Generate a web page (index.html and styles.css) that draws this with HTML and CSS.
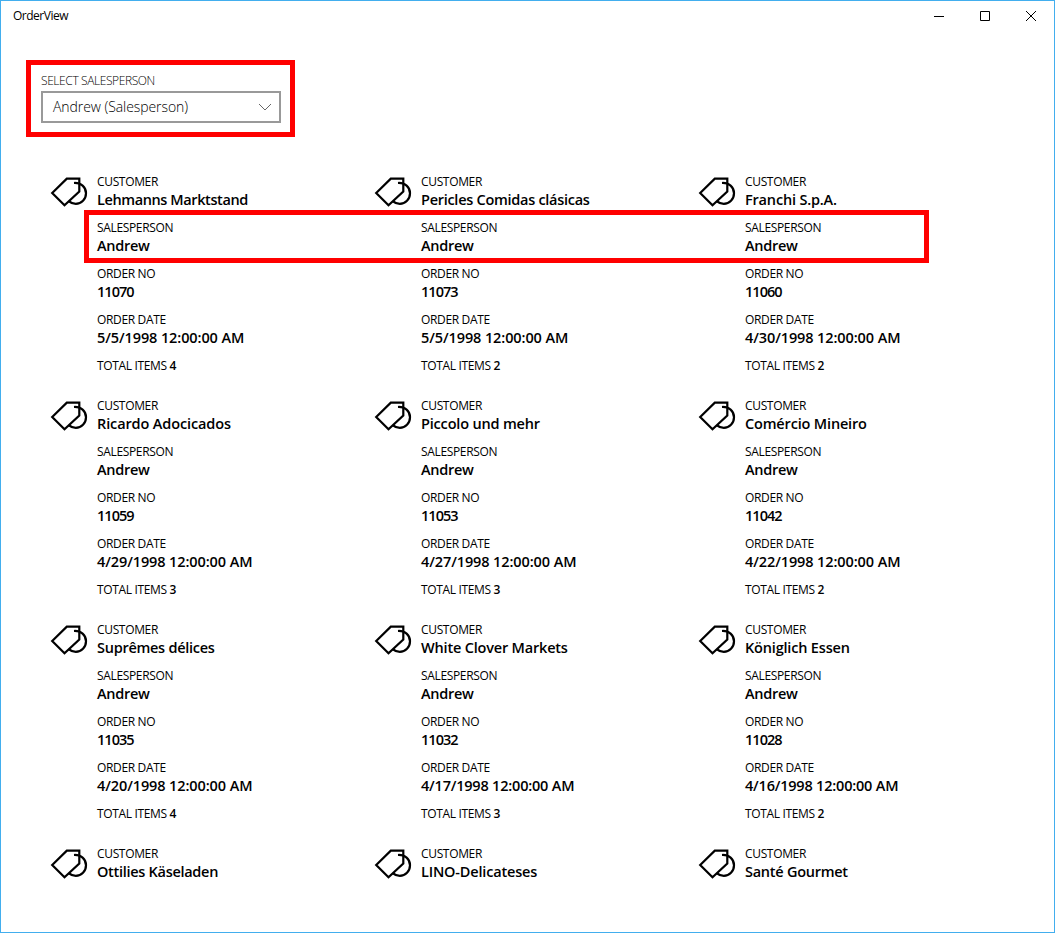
FILE: index.html
```html
<!DOCTYPE html>
<html lang="en">
<head>
<meta charset="utf-8">
<title>OrderView</title>
<link rel="stylesheet" href="styles.css">
</head>
<body>
<div class="window">
  <header class="titlebar">
    <span class="title">OrderView</span>
    <div class="controls">
      <svg class="control" viewBox="0 0 46 30"><path d="M18 15.5h10"/></svg>
      <svg class="control" viewBox="0 0 46 30"><path d="M18.5 10.5h9v9h-9z"/></svg>
      <svg class="control" viewBox="0 0 46 30"><path d="M18 10l10 10M28 10l-10 10"/></svg>
    </div>
  </header>
  <section class="filter">
    <div class="filter-label">SELECT SALESPERSON</div>
    <div class="select"><span class="select-text">Andrew (Salesperson)</span>
      <svg class="chevron" viewBox="0 0 14 8"><path d="M1 1l6 6 6-6"/></svg>
    </div>
  </section>
  <main class="orders" id="orders"></main>
  <div class="highlight"></div>
</div>
<script src="app.js"></script>
</body>
</html>
```

FILE: styles.css
```css
* { box-sizing: border-box; }
body { margin: 0; background: #fff; color: #000; font-family: "Open Sans", "Noto Sans", sans-serif; }
.window { position: relative; width: 1055px; height: 933px; border: 1px solid #42aeee; overflow: hidden; background: #fff; }
.titlebar { display: flex; justify-content: space-between; height: 30px; }
.title { padding-left: 12px; font-size: 12px; line-height: 30px; letter-spacing: -0.5px; }
.controls { display: flex; }
.control { width: 46px; height: 30px; fill: none; stroke: #000; stroke-width: 1; }
.filter { width: 269px; height: 77px; margin: 29px 0 0 25px; border: 5px solid #f00; padding: 7px 10px; }
.filter-label { height: 19px; padding-top: 1px; font-size: 12px; font-weight: 300; line-height: 16px; letter-spacing: -0.4px; white-space: nowrap; }
.select { display: flex; justify-content: space-between; align-items: center; width: 240px; height: 32px; border: 2px solid #999; padding: 0 7px 0 10px; }
.select-text { padding-bottom: 2px; font-size: 14px; font-weight: 300; letter-spacing: -0.07px; white-space: nowrap; }
.chevron { width: 14px; height: 8px; fill: none; stroke: #666; stroke-width: 1; }
.orders { display: grid; grid-template-columns: repeat(3, 324px); grid-auto-rows: 200px; row-gap: 24px; height: 712px; margin: 37px 0 0 49px; overflow: hidden; }
.card { display: flex; gap: 8px; }
.tag { flex: none; width: 39px; height: 36px; fill: none; stroke: #000; stroke-width: 2.2; }
.fields { display: flex; flex-direction: column; gap: 10px; white-space: nowrap; }
.label { height: 16px; font-size: 12px; line-height: 16px; letter-spacing: -0.34px; }
.value { height: 20px; font-size: 14.5px; font-weight: 600; line-height: 20px; }
.person .value { letter-spacing: -0.28px; }
.number .value { letter-spacing: -0.95px; }
.date .value { letter-spacing: -0.1px; }
.count { font-weight: 600; letter-spacing: 0; }
.highlight { position: absolute; left: 83px; top: 209px; width: 845px; height: 53px; border: 5px solid #f00; }
```

FILE: app.js
```js
// customer, name tracking in px, order number, date, item count
const orders = [
  ["Lehmanns Marktstand", -0.4, "11070", "5/5/1998", 4],
  ["Pericles Comidas clásicas", -0.28, "11073", "5/5/1998", 2],
  ["Franchi S.p.A.", -0.18, "11060", "4/30/1998", 2],
  ["Ricardo Adocicados", -0.12, "11059", "4/29/1998", 3],
  ["Piccolo und mehr", -0.18, "11053", "4/27/1998", 3],
  ["Comércio Mineiro", -0.17, "11042", "4/22/1998", 2],
  ["Suprêmes délices", -0.27, "11035", "4/20/1998", 4],
  ["White Clover Markets", -0.19, "11032", "4/17/1998", 3],
  ["Königlich Essen", -0.18, "11028", "4/16/1998", 2],
  ["Ottilies Käseladen", -0.29],
  ["LINO-Delicateses", -0.18],
  ["Santé Gourmet", -0.26]
];
const tag = '<svg class="tag" viewBox="0 0 39 36"><path d="M2.2 19L16.8 4.6H29.3V17.5L14.5 31.3Z"/><path d="M24 9C31 8.6 36 13.2 36 19.2C36 25.2 31.4 29.8 25.8 29.8C23.2 29.8 20.8 29 19 27.4"/></svg>';
const field = (kind, label, value, style = "") =>
  `<div class="field ${kind}"><div class="label">${label}</div><div class="value"${style}>${value}</div></div>`;
document.getElementById("orders").innerHTML = orders.map(([customer, tracking, no, date, items]) =>
  `<article class="card">${tag}<div class="fields">` +
  field("customer", "CUSTOMER", customer, ` style="letter-spacing:${tracking}px"`) +
  (no ? field("person", "SALESPERSON", "Andrew") + field("number", "ORDER NO", no) +
    field("date", "ORDER DATE", date + " 12:00:00 AM", /4\/1/.test(date) ? ' style="letter-spacing:-0.2px"' : "") +
    `<div class="label total">TOTAL ITEMS <span class="count">${items}</span></div>` : "") +
  `</div></article>`).join("");
```
